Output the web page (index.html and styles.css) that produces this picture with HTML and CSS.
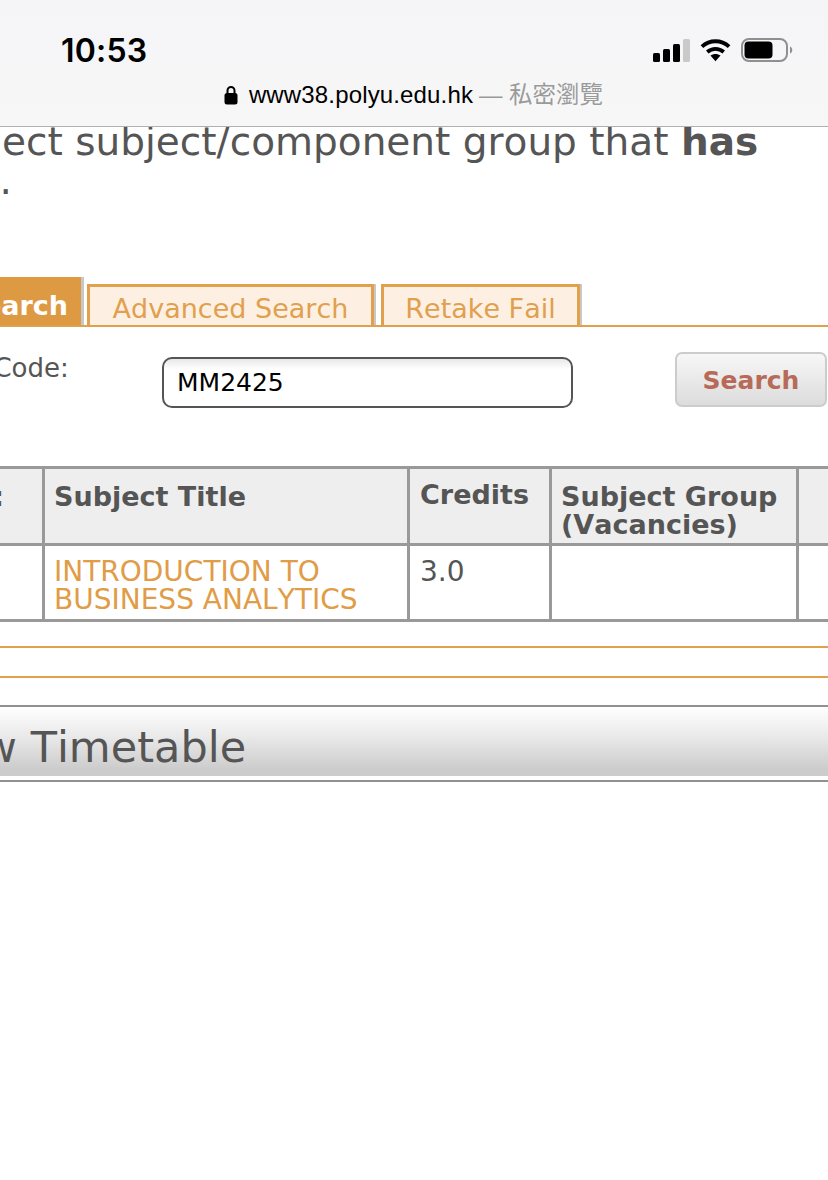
FILE: index.html
```html
<!DOCTYPE html>
<html lang="zh-Hant">
<head>
<meta charset="utf-8">
<title>Subject Search</title>
<link rel="stylesheet" href="styles.css">
</head>
<body>
<header class="chrome">
  <div class="status">
    <span class="time">10:53</span>
    <span class="indicators">
      <svg class="signal" width="37" height="23" viewBox="0 0 37 23"><rect x="0" y="14" width="7" height="9" rx="1.500" fill="#000"/><rect x="10" y="10" width="7" height="13" rx="1.500" fill="#000"/><rect x="20" y="5" width="7" height="18" rx="1.500" fill="#000"/><rect x="30" y="0" width="7" height="23" rx="1.500" fill="#c9c9c9"/></svg>
      <svg class="wifi" width="31" height="24" viewBox="0 0 32 24"><path d="M2 8.500C10 1.200 22 1.200 30 8.500" fill="none" stroke="#000" stroke-width="4"/><path d="M7.500 14C12.500 9.800 19.500 9.800 24.500 14" fill="none" stroke="#000" stroke-width="4"/><path d="M16 23.500L10.800 17.800C13.800 15.500 18.200 15.500 21.200 17.800Z" fill="#000"/></svg>
      <svg class="battery" width="52" height="24" viewBox="0 0 52 24"><rect x="1" y="1" width="45" height="22" rx="7" fill="none" stroke="#8f8f8f" stroke-width="2"/><rect x="3.500" y="3.500" width="28" height="17" rx="4" fill="#000"/><path d="M49 8.500C52 9.500 52 14.500 49 15.500Z" fill="#8f8f8f"/></svg>
    </span>
  </div>
  <div class="address">
    <svg class="lock" width="14" height="20" viewBox="0 0 14 20"><path d="M3.500 9V5.500a3.500 3.500 0 0 1 7 0V9" fill="none" stroke="#000" stroke-width="2"/><rect x="0.500" y="8" width="13" height="11.500" rx="2.500" fill="#000"/></svg>
    <span class="url">www38.polyu.edu.hk</span>
    <span class="private">— 私密瀏覽</span>
  </div>
</header>
<main class="page">
  <p class="intro"><span class="intro-line-1">Please select subject/component group that <b>has</b></span><span class="intro-line-2">vacancy.</span></p>
  <nav class="tabs">
    <a class="tab tab-active">Basic Search</a>
    <a class="tab tab-adv">Advanced Search</a>
    <a class="tab tab-retake">Retake Fail</a>
  </nav>
  <form class="search">
    <label class="search-label">Subject Code:</label>
    <span class="search-input">MM2425</span>
    <span class="search-btn">Search</span>
  </form>
  <table class="results">
    <tr class="head">
      <th class="c-code"><div class="c-code-inner">Subject Code:</div></th>
      <th class="c-title">Subject Title</th>
      <th class="c-credits">Credits</th>
      <th class="c-group">Subject Group (Vacancies)</th>
      <th class="c-more"></th>
    </tr>
    <tr>
      <td></td>
      <td><a class="link">INTRODUCTION TO BUSINESS ANALYTICS</a></td>
      <td class="num">3.0</td>
      <td></td>
      <td></td>
    </tr>
  </table>
  <hr class="rule rule-1">
  <hr class="rule rule-2">
  <div class="timetable"><span class="timetable-text">View Timetable</span></div>
  <hr class="grey-rule">
</main>
</body>
</html>
```
FILE: styles.css
```css
* { box-sizing: border-box; }
html, body { margin: 0; padding: 0; height: 100%; overflow: hidden; background: #fff; }
body { font-family: "DejaVu Sans", sans-serif; color: #555; }

.chrome {
  height: 127px;
  background: linear-gradient(#f5f4f7, #f7f7f7);
  border-bottom: 1px solid #b0b0b0;
  padding: 0 35px 0 61px;
  position: relative;
  z-index: 1;
}
.status { display: flex; justify-content: space-between; align-items: center; height: 78px; padding-top: 22px; }
.time { font-family: Inter, Roboto, sans-serif; font-weight: 600; font-size: 32px; color: #000; letter-spacing: 0.2px; }
.indicators { display: flex; align-items: center; gap: 10px; }
.address { display: flex; align-items: center; justify-content: center; gap: 8px; margin-left: -27px; height: 34px; }
.lock { margin-right: 3px; }
.url { font-family: "Liberation Sans", sans-serif; font-size: 24px; color: #000; letter-spacing: 0.15px; }
.private { font-family: "Liberation Sans", "Noto Sans CJK TC", sans-serif; font-size: 23.5px; color: #9a9a9a; margin-left: -2px; margin-bottom: 4px; }

.page { margin-left: -170px; width: 1100px; font-kerning: none; }
.intro { margin: -5px 0 0; font-size: 39px; line-height: 39px; color: #555; white-space: nowrap; height: 78px; }
.intro b { font-weight: 700; }
.intro-line-1 { display: block; margin-left: -22px; }
.intro-line-2 { display: block; margin-left: 8px; }

.tabs { display: flex; align-items: flex-end; height: 127px; border-bottom: 2px solid #e0a04e; padding-left: 50px; width: 1100px; }
.tab { display: block; font-size: 27px; }
.tab-active { display: flex; justify-content: flex-end; width: 201px; height: 48px; background: #de9a42; color: #fff; font-weight: 700; line-height: 57px; padding-right: 13px; box-shadow: 3px 0 0 #c8c8c8; margin-right: 6px; white-space: nowrap; }
.tab-adv, .tab-retake { height: 41px; background: #fdf0e3; color: #e0a04e; border: 3px solid #e0a04e; border-bottom-width: 0; box-shadow: 2px 0 0 #c8c8c8; line-height: 44px; text-align: center; white-space: nowrap; }
.tab-adv { width: 287px; margin-right: 7px; }
.tab-retake { width: 199px; }

.search { display: flex; align-items: flex-start; height: 139px; }
.search-label { font-size: 26px; width: 332px; padding: 26px 0 0 58px; white-space: nowrap; }
.search-input { width: 411px; height: 51px; margin-top: 30px; border: 2px solid #555; border-radius: 10px; font-size: 25px; line-height: 47px; color: #000; padding-left: 13px; background: linear-gradient(#e8e8e8, #fff 22%); }
.search-btn { width: 152px; height: 55px; margin: 25px 0 0 102px; border: 2px solid #ccc; border-radius: 7px; background: linear-gradient(#f7f7f7, #dcdcdc); color: #b86a58; font-size: 25px; font-weight: 700; line-height: 54px; text-align: center; }

.results { border-collapse: collapse; table-layout: fixed; width: 1100px; }
.results th, .results td { border: 3px solid #999; padding: 10px 9px 0; vertical-align: top; font-size: 27px; line-height: 28px; text-align: left; }
.results th { background: #eee; color: #555; height: 77px; }
.results td { height: 76px; font-size: 28px; padding-top: 12px; }
.c-code { width: 212px; }
.c-title { width: 365px; }
.c-credits { width: 142px; }
.c-group { width: 247px; }
.link { color: #e09c46; }
.results .num { color: #555; padding-left: 10px; }
.results .c-code { padding: 14px 38px 0 0; }
.c-code-inner { display: flex; justify-content: flex-end; white-space: nowrap; }
.results .c-credits { padding-top: 12px; padding-left: 10px; }
.results .c-title { padding-top: 14px; }
.results .c-group { padding-top: 14px; }

.rule { border: 0; margin: 0; height: 2px; background: #e0a04e; }
.rule-1 { margin-top: 24px; }
.rule-2 { margin-top: 28px; }
.timetable { margin-top: 27px; height: 71px; border-top: 2px solid #919191; background: linear-gradient(#fff, #e8e8e8 45%, #ccc 90%); font-size: 43px; line-height: 80px; padding-left: 84px; white-space: nowrap; }
.grey-rule { border: 0; margin: 4px 0 0; height: 2px; background: #919191; }
```
